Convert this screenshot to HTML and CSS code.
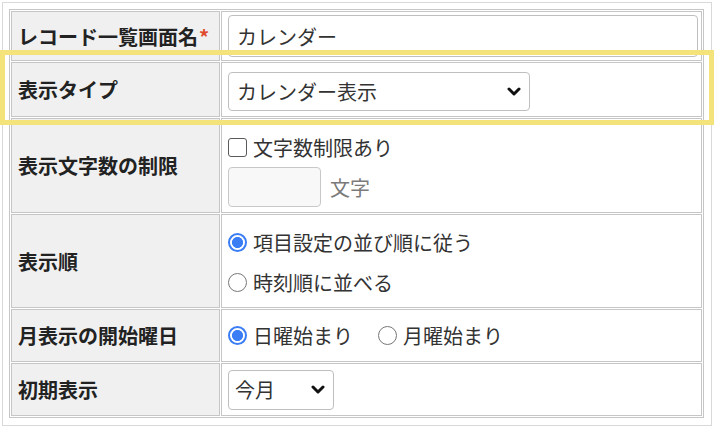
FILE: index.html
```html
<!DOCTYPE html>
<html lang="ja">
<head>
<meta charset="utf-8">
<title>カレンダー設定</title>
<link rel="stylesheet" href="styles.css">
</head>
<body>
<div class="page">
  <div class="frame">
    <table class="form">
      <tr class="r1">
        <th>レコード一覧画面名<span class="req">*</span></th>
        <td><input class="text-field" type="text" value="カレンダー"></td>
      </tr>
      <tr class="r2">
        <th>表示タイプ</th>
        <td>
          <div class="select wide">
            <span>カレンダー表示</span>
            <svg class="chev" width="14" height="9" viewBox="0 0 14 9"><polyline points="2,2 7,7 12,2" fill="none" stroke="#111" stroke-width="3" stroke-linecap="round" stroke-linejoin="round"/></svg>
          </div>
        </td>
      </tr>
      <tr class="r3">
        <th>表示文字数の制限</th>
        <td class="top">
          <label class="line"><input class="check" type="checkbox"><span>文字数制限あり</span></label>
          <div class="num-row"><input class="num-field" type="text"><span class="unit">文字</span></div>
        </td>
      </tr>
      <tr class="r4">
        <th>表示順</th>
        <td class="top">
          <label class="line"><input class="radio" type="radio" name="order" checked><span>項目設定の並び順に従う</span></label>
          <label class="line second"><input class="radio" type="radio" name="order"><span>時刻順に並べる</span></label>
        </td>
      </tr>
      <tr class="r5">
        <th>月表示の開始曜日</th>
        <td>
          <div class="inline-options">
            <label class="line"><input class="radio" type="radio" name="week" checked><span>日曜始まり</span></label>
            <label class="line"><input class="radio" type="radio" name="week"><span>月曜始まり</span></label>
          </div>
        </td>
      </tr>
      <tr class="r6">
        <th>初期表示</th>
        <td>
          <div class="select narrow">
            <span>今月</span>
            <svg class="chev" width="14" height="9" viewBox="0 0 14 9"><polyline points="2,2 7,7 12,2" fill="none" stroke="#111" stroke-width="3" stroke-linecap="round" stroke-linejoin="round"/></svg>
          </div>
        </td>
      </tr>
    </table>
  </div>
  <div class="highlight"></div>
</div>
</body>
</html>
```

FILE: styles.css
```css
* { box-sizing: border-box; }
html, body { margin: 0; padding: 0; background: #fff; }
body { font-family: "Noto Sans CJK JP", "Noto Sans", sans-serif; color: #333; }

.page { position: relative; width: 714px; height: 427px; overflow: hidden; }

.frame {
  margin: 2px;
  width: 710px;
  height: 424px;
  border: 1px solid #d9d9d9;
  padding: 6px 0 0 6px;
}

.form {
  table-layout: fixed;
  width: 695px;
  border: 1px solid #c6c6c6;
  border-collapse: separate;
  border-spacing: 1px;
}

.form th, .form td {
  border: 1px solid #c6c6c6;
  padding: 0 0 0 6px;
  vertical-align: middle;
  font-size: 20px;
}

.form th {
  width: 209px;
  background: #f0f0f0;
  text-align: left;
  font-weight: 700;
  color: #222;
  white-space: nowrap;
}

.form td { background: #fff; color: #333; }

.req { color: #e04a2c; font-weight: 700; margin-left: 1px; }

.r1 th, .r1 td { height: 50px; }
.r2 th, .r2 td { height: 55px; }
.r3 th, .r3 td { height: 95px; }
.r4 th, .r4 td { height: 94px; }
.r5 th, .r5 td { height: 53px; }
.r6 th, .r6 td { height: 53px; }

.r3 td.top { vertical-align: top; padding-top: 16px; }
.r4 td.top { vertical-align: top; padding-top: 15px; }
.r2 td { padding-top: 3px; }

.text-field {
  display: block;
  width: 470px;
  height: 42px;
  border: 1px solid #bfbfbf;
  border-radius: 4px;
  padding: 0 8px;
  font: inherit;
  font-size: 20px;
  color: #333;
  background: #fff;
}

.select {
  display: flex;
  align-items: center;
  justify-content: space-between;
  height: 39px;
  border: 1px solid #bfbfbf;
  border-radius: 4px;
  padding: 0 8px 0 8px;
  background: #fff;
  color: #333;
}
.select.wide { width: 302px; }
.select.narrow { width: 106px; height: 40px; padding-left: 6px; }
.chev { display: block; flex: none; }

.line {
  display: flex;
  align-items: center;
  height: 24px;
  gap: 6px;
  white-space: nowrap;
}
.line.second { margin-top: 16px; }

.check {
  appearance: none;
  -webkit-appearance: none;
  width: 19px;
  height: 19px;
  margin: 0;
  border: 1.5px solid #5a5a5a;
  border-radius: 3px;
  background: #fff;
  flex: none;
}

.radio {
  appearance: none;
  -webkit-appearance: none;
  width: 19px;
  height: 19px;
  margin: 0;
  border: 1.5px solid #777;
  border-radius: 50%;
  background: #fff;
  flex: none;
}
.radio:checked {
  border: 2px solid #3a7df5;
  background: radial-gradient(circle, #3a7df5 0 5.2px, #fff 5.9px);
}

.num-row { display: flex; align-items: center; margin-top: 8px; }
.num-field {
  width: 93px;
  height: 40px;
  border: 1px solid #c8c8c8;
  border-radius: 4px;
  background: #f8f8f8;
  font: inherit;
  margin: 0;
}
.unit { color: #7a7a7a; margin-left: 9px; }

.inline-options { display: flex; align-items: center; gap: 25px; }

.highlight {
  position: absolute;
  left: 0;
  top: 50px;
  width: 714px;
  height: 75px;
  border: 5px solid #f4e37a;
  pointer-events: none;
}
```
